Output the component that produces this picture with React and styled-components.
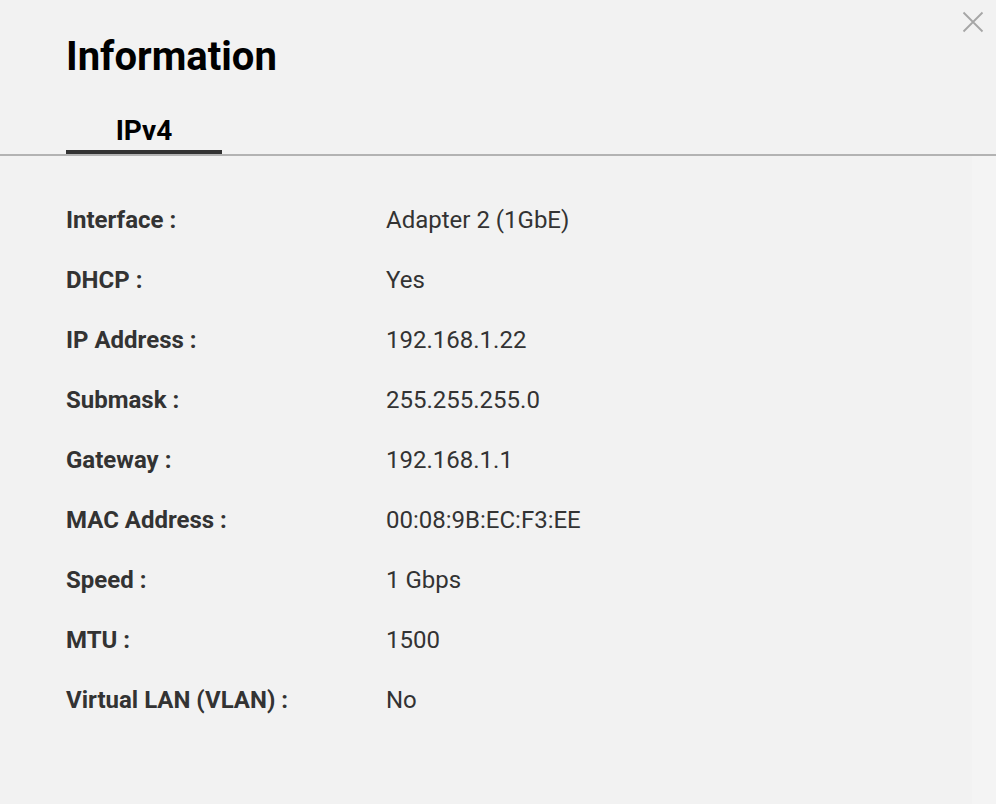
import styled, { createGlobalStyle } from 'styled-components';

const GlobalStyle = createGlobalStyle`
  html, body {
    margin: 0;
    padding: 0;
    background: #f2f2f2;
    font-family: Roboto, "Liberation Sans", Arial, sans-serif;
  }
`;

const rows = [
  ['Interface :', 'Adapter 2 (1GbE)'],
  ['DHCP :', 'Yes'],
  ['IP Address :', '192.168.1.22'],
  ['Submask :', '255.255.255.0'],
  ['Gateway :', '192.168.1.1'],
  ['MAC Address :', '00:08:9B:EC:F3:EE'],
  ['Speed :', '1 Gbps'],
  ['MTU :', '1500'],
  ['Virtual LAN (VLAN) :', 'No'],
];

function App() {
  return (
    <>
      <GlobalStyle />
      <Dialog>
        <Header>
          <Title>Information</Title>
          <Tabs>
            <Tab active>IPv4</Tab>
          </Tabs>
          <CloseButton aria-label="close">
            <svg width="22" height="22" viewBox="0 0 22 22">
              <path d="M1.5 1.5L20.5 20.5M20.5 1.5L1.5 20.5" stroke="#a6a6a6" strokeWidth="1.8" fill="none" />
            </svg>
          </CloseButton>
        </Header>
        <Body>
          <Content>
            {rows.map(([label, value]) => (
              <Row key={label}>
                <Label>{label}</Label>
                <Value>{value}</Value>
              </Row>
            ))}
          </Content>
          <ScrollTrack />
        </Body>
      </Dialog>
    </>
  );
}

const Dialog = styled.div`
  width: 996px;
  height: 804px;
  display: flex;
  flex-direction: column;
  background: #f2f2f2;
  overflow: hidden;
`;

const Header = styled.div`
  position: relative;
  padding: 33px 0 0 66px;
  border-bottom: 2px solid #b3b3b3;
`;

const Title = styled.h1`
  margin: 0;
  font-size: 40px;
  font-weight: 700;
  color: #000;
  line-height: 47px;
`;

const Tabs = styled.div`
  display: flex;
  margin-top: 34px;
`;

const Tab = styled.div`
  width: 156px;
  text-align: center;
  font-size: 28px;
  font-weight: 700;
  color: #000;
  line-height: 33px;
  padding-bottom: 3px;
  border-bottom: 4px solid ${(p) => (p.active ? '#333' : 'transparent')};
`;

const CloseButton = styled.button`
  position: absolute;
  top: 11px;
  right: 12px;
  width: 22px;
  height: 22px;
  padding: 0;
  border: none;
  background: transparent;
  cursor: pointer;
`;

const Body = styled.div`
  flex: 1;
  display: flex;
`;

const Content = styled.div`
  flex: 1;
  padding: 50px 0 0 66px;
`;

const ScrollTrack = styled.div`
  width: 24px;
  background: #f4f4f4;
`;

const Row = styled.div`
  display: flex;
  height: 60px;
  align-items: flex-start;
  font-size: 24px;
  line-height: 28px;
  color: #333;
`;

const Label = styled.div`
  width: 320px;
  font-weight: 700;
`;

const Value = styled.div`
  font-weight: 400;
`;

export default App;
